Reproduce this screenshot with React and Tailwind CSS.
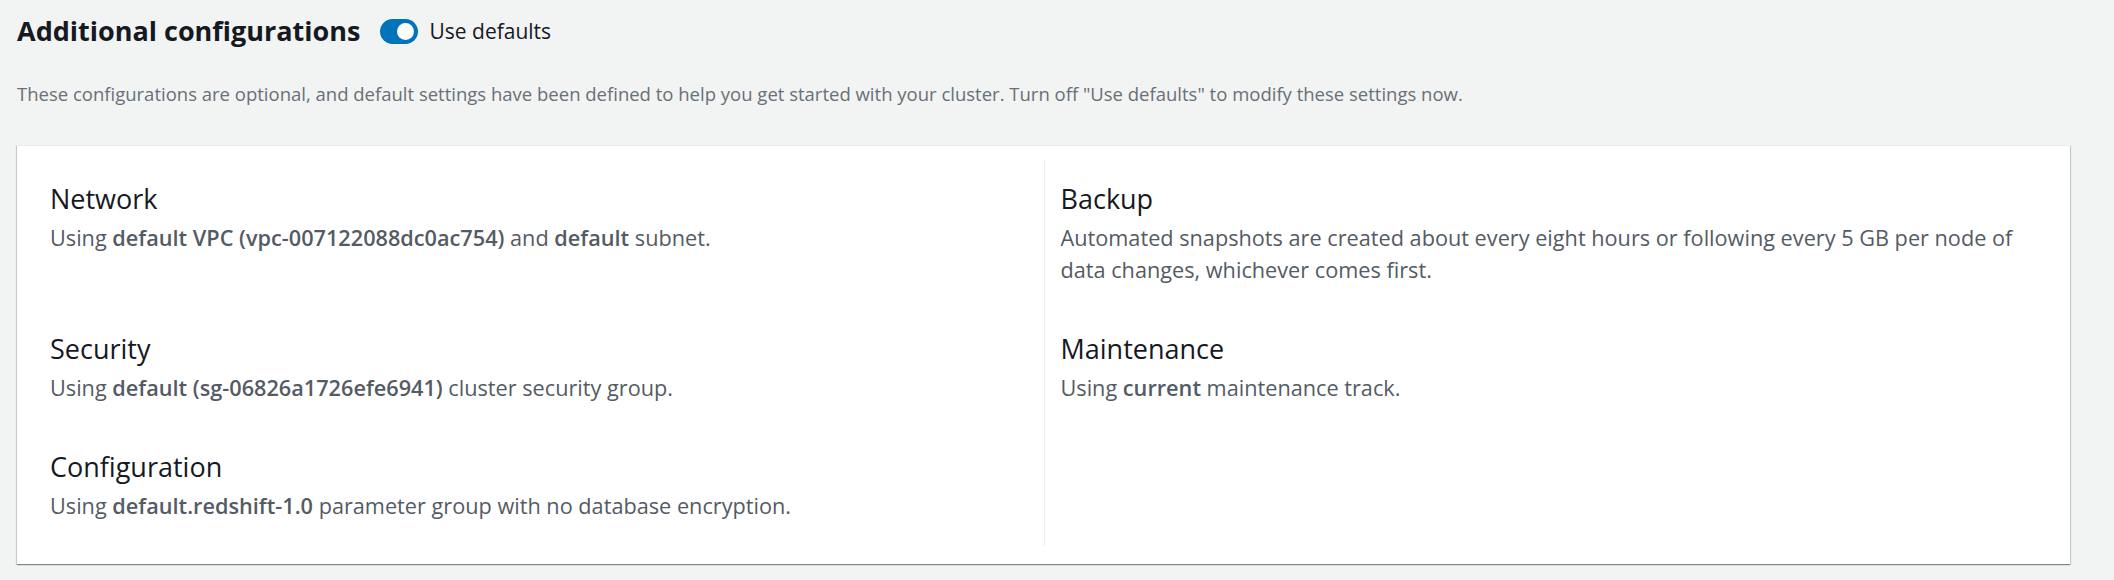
const sections = {
  left: [
    {
      title: 'Network',
      body: (
        <>
          Using <b className="font-semibold">default VPC (vpc-007122088dc0ac754)</b> and{' '}
          <b className="font-semibold">default</b> subnet.
        </>
      ),
    },
    {
      title: 'Security',
      body: (
        <>
          Using <b className="font-semibold">default (sg-06826a1726efe6941)</b> cluster security group.
        </>
      ),
    },
    {
      title: 'Configuration',
      body: (
        <>
          Using <b className="font-semibold">default.redshift-1.0</b> parameter group with no database
          encryption.
        </>
      ),
    },
  ],
  right: [
    {
      title: 'Backup',
      body: (
        <>
          Automated snapshots are created about every eight hours or following every 5 GB per node of
          data changes, whichever comes first.
        </>
      ),
    },
    {
      title: 'Maintenance',
      body: (
        <>
          Using <b className="font-semibold">current</b> maintenance track.
        </>
      ),
    },
    null,
  ],
}

function Cell({ item, right }) {
  return (
    <div
      className={
        right
          ? 'border-l border-[#eaeded] pl-[16px] pr-[50px] pt-[22px] pb-[24px]'
          : 'pl-[33px] pr-[33px] pt-[22px] pb-[24px]'
      }
    >
      {item && (
        <>
          <h3 className="text-[27px] leading-[33px] font-normal text-[#16191f]">{item.title}</h3>
          <p className="mt-[7px] text-[21.7px] leading-[32px] text-[#545b64]">{item.body}</p>
        </>
      )}
    </div>
  )
}

export default function App() {
  const rows = [0, 1, 2]
  return (
    <div
      className="w-full h-[580px] bg-[#f2f3f3] pl-[17px] pr-[44px] pt-[13px]"
      style={{ fontFamily: '"Open Sans", "Noto Sans", sans-serif' }}
    >
      <div className="flex items-center">
        <h2 className="text-[27px] leading-[36px] font-bold text-[#16191f]">Additional configurations</h2>
        <div className="ml-[20px] w-[38px] h-[25px] rounded-full bg-[#0073bb] flex items-center justify-end pr-[4px]">
          <div className="w-[17px] h-[17px] rounded-full bg-white" />
        </div>
        <span className="ml-[11px] text-[21px] leading-[28px] text-[#16191f]">Use defaults</span>
      </div>

      <p className="mt-[33px] text-[18.5px] leading-[24px] text-[#687078]">
        These configurations are optional, and default settings have been defined to help you get started
        with your cluster. Turn off "Use defaults" to modify these settings now.
      </p>

      <div className="mt-[39px] bg-white border-t border-[#eaeded] pt-[14px] pb-[18px] shadow-[0_1px_1px_0_rgba(0,28,36,0.3),1px_1px_1px_0_rgba(0,28,36,0.15),-1px_1px_1px_0_rgba(0,28,36,0.15)]">
        <div className="grid grid-cols-2">
          {rows.map((i) => (
            <>
              <Cell key={'l' + i} item={sections.left[i]} />
              <Cell key={'r' + i} item={sections.right[i]} right />
            </>
          ))}
        </div>
      </div>
    </div>
  )
}
